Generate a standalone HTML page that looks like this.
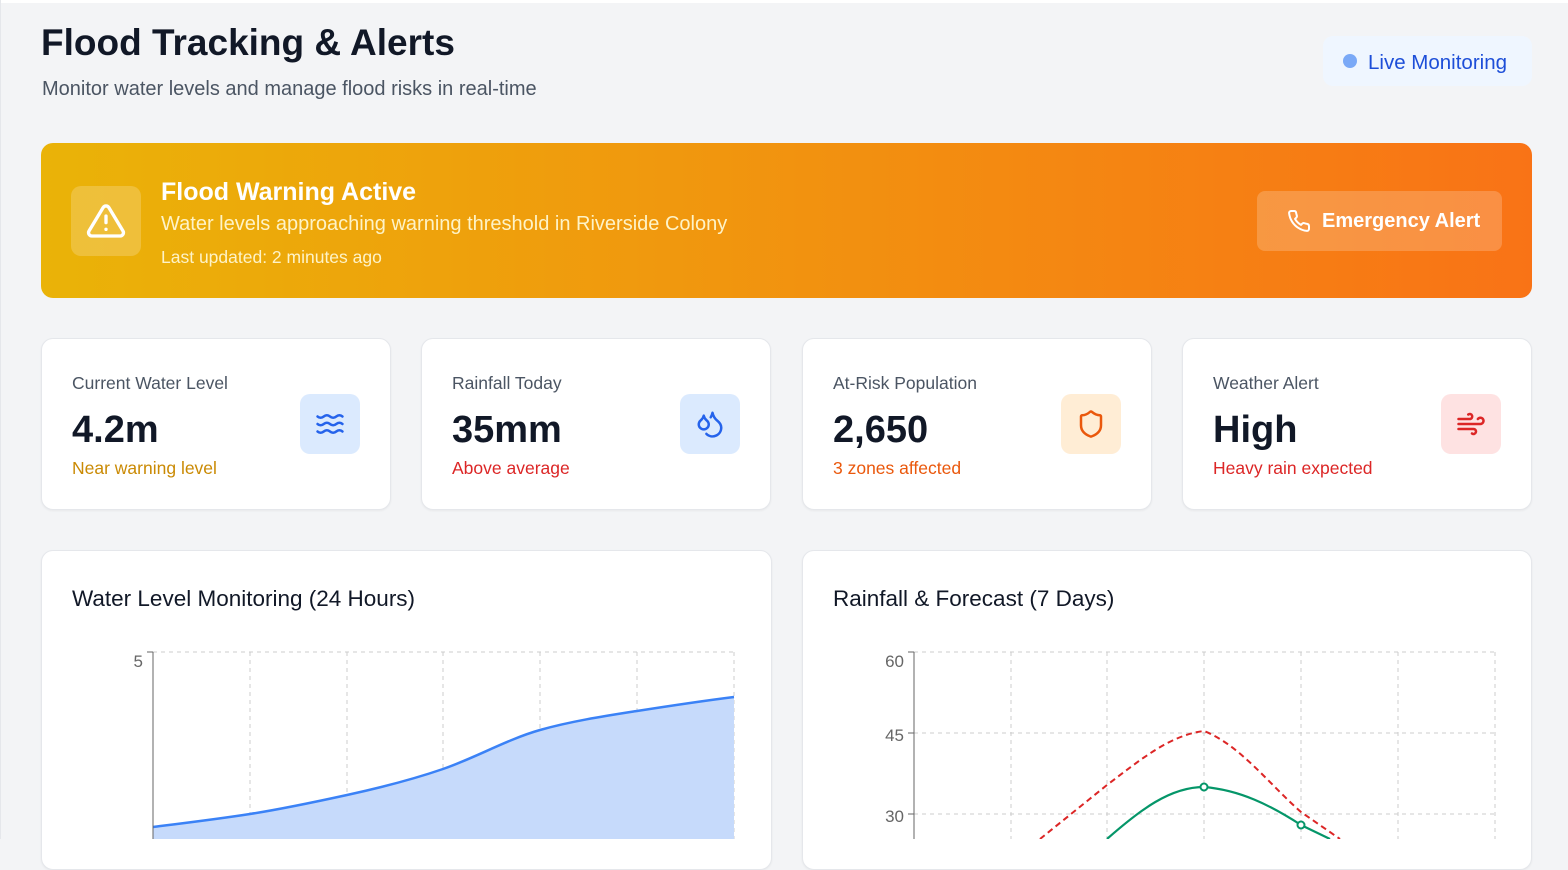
<!DOCTYPE html>
<html><head><meta charset="utf-8"><style>
*{box-sizing:border-box;margin:0;padding:0}
body{width:1568px;height:839px;overflow:hidden;background:#f3f4f6;font-family:"Liberation Sans",sans-serif;position:relative;color:#111827}
.abs{position:absolute}
.card{position:absolute;background:#fff;border:1px solid #e5e7eb;border-radius:12px;box-shadow:0 1px 2px rgba(0,0,0,.05)}
.lbl{position:absolute;left:30px;top:34px;font-size:17.5px;color:#4b5563}
.val{position:absolute;left:30px;top:70px;font-size:38px;font-weight:bold;color:#111827}
.sub{position:absolute;left:30px;top:119px;font-size:17.5px}
.ic{position:absolute;left:258px;top:55px;width:60px;height:60px;border-radius:10px;display:flex;align-items:center;justify-content:center}
</style></head><body>
<div class="abs" style="left:0;top:0;width:1568px;height:3px;background:#fff"></div>
<div class="abs" style="left:0;top:0;width:1px;height:839px;background:#e5e7eb"></div>
<div class="abs" style="left:41px;top:22px;font-size:37px;font-weight:bold;color:#111827">Flood Tracking &amp; Alerts</div>
<div class="abs" style="left:42px;top:78px;font-size:20px;color:#4b5563">Monitor water levels and manage flood risks in real-time</div>
<div class="abs" style="left:1323px;top:36px;width:209px;height:50px;background:#eff6ff;border-radius:10px"></div>
<div class="abs" style="left:1343px;top:54px;width:14px;height:14px;border-radius:50%;background:#7aa9f7"></div>
<div class="abs" style="left:1368px;top:51px;font-size:20.5px;color:#1d4ed8">Live Monitoring</div>

<div class="abs" style="left:41px;top:143px;width:1491px;height:155px;border-radius:12px;background:linear-gradient(90deg,#eab308,#f97316)"></div>
<div class="abs" style="left:71px;top:186px;width:70px;height:70px;border-radius:10px;background:rgba(255,255,255,.2);display:flex;align-items:center;justify-content:center">
<svg width="40" height="40" viewBox="0 0 24 24" fill="none" stroke="#fff" stroke-width="2" stroke-linecap="round" stroke-linejoin="round"><path d="M10.3 3.9 1.8 18a2 2 0 0 0 1.7 3h17a2 2 0 0 0 1.7-3L13.7 3.9a2 2 0 0 0-3.4 0z"/><path d="M12 9v4M12 17h.01"/></svg></div>
<div class="abs" style="left:161px;top:178px;font-size:25px;font-weight:bold;color:#fff">Flood Warning Active</div>
<div class="abs" style="left:161px;top:213px;font-size:20px;color:#fef3c7">Water levels approaching warning threshold in Riverside Colony</div>
<div class="abs" style="left:161px;top:247px;font-size:17.5px;color:#fef3c7">Last updated: 2 minutes ago</div>
<div class="abs" style="left:1257px;top:191px;width:245px;height:60px;border-radius:8px;background:rgba(255,255,255,.2)"></div>
<svg class="abs" style="left:1287px;top:209px" width="24" height="24" viewBox="0 0 24 24" fill="none" stroke="#fff" stroke-width="2" stroke-linecap="round" stroke-linejoin="round"><path d="M22 16.9v3a2 2 0 0 1-2.2 2 19.8 19.8 0 0 1-8.6-3.1 19.5 19.5 0 0 1-6-6 19.8 19.8 0 0 1-3.1-8.7A2 2 0 0 1 4.1 2h3a2 2 0 0 1 2 1.7c.1 1 .4 1.9.7 2.8a2 2 0 0 1-.5 2.1L8 9.9a16 16 0 0 0 6 6l1.3-1.3a2 2 0 0 1 2.1-.4c.9.3 1.8.6 2.8.7a2 2 0 0 1 1.7 2z"/></svg>
<div class="abs" style="left:1322px;top:210px;font-size:20px;font-weight:bold;color:#fff">Emergency Alert</div>

<div class="card" style="left:41px;top:338px;width:350px;height:172px">
<div class="lbl">Current Water Level</div><div class="val">4.2m</div><div class="sub" style="color:#ca8a04">Near warning level</div>
<div class="ic" style="background:#dbeafe"><svg width="30" height="30" viewBox="0 0 24 24" fill="none" stroke="#2563eb" stroke-width="2" stroke-linecap="round"><path d="M2 6c.6.5 1.2 1 2.5 1C7 7 7 5 9.5 5s2.5 2 5 2 2.5-2 5-2c1.3 0 1.9.5 2.5 1M2 12c.6.5 1.2 1 2.5 1 2.5 0 2.5-2 5-2s2.5 2 5 2 2.5-2 5-2c1.3 0 1.9.5 2.5 1M2 18c.6.5 1.2 1 2.5 1 2.5 0 2.5-2 5-2s2.5 2 5 2 2.5-2 5-2c1.3 0 1.9.5 2.5 1"/></svg></div></div>
<div class="card" style="left:421px;top:338px;width:350px;height:172px">
<div class="lbl">Rainfall Today</div><div class="val">35mm</div><div class="sub" style="color:#dc2626">Above average</div>
<div class="ic" style="background:#dbeafe"><svg width="30" height="30" viewBox="0 0 24 24" fill="none" stroke="#2563eb" stroke-width="2" stroke-linecap="round" stroke-linejoin="round"><path d="M7 16.3c2.2 0 4-1.8 4-4 0-1.2-.6-2.3-1.8-3.3S7.3 6.6 7 5.3c-.3 1.3-1 2.6-2.2 3.6S3 11.1 3 12.3c0 2.2 1.8 4 4 4z"/><path d="M12.6 6.6A11 11 0 0 0 14 3c.5 2.5 2 4.9 4 6.5s3 3.5 3 5.5a7 7 0 0 1-11.9 4.9"/></svg></div></div>
<div class="card" style="left:802px;top:338px;width:350px;height:172px">
<div class="lbl">At-Risk Population</div><div class="val">2,650</div><div class="sub" style="color:#ea580c">3 zones affected</div>
<div class="ic" style="background:#ffedd5"><svg width="30" height="30" viewBox="0 0 24 24" fill="none" stroke="#ea580c" stroke-width="2" stroke-linejoin="round"><path d="M20 13c0 5-3.5 7.5-7.7 9a1 1 0 0 1-.7 0C7.5 20.5 4 18 4 13V6a1 1 0 0 1 1-1c2 0 4.5-1.2 6.2-2.7a1.2 1.2 0 0 1 1.5 0C14.5 3.8 17 5 19 5a1 1 0 0 1 1 1z"/></svg></div></div>
<div class="card" style="left:1182px;top:338px;width:350px;height:172px">
<div class="lbl">Weather Alert</div><div class="val">High</div><div class="sub" style="color:#dc2626">Heavy rain expected</div>
<div class="ic" style="background:#fee2e2"><svg width="30" height="30" viewBox="0 0 24 24" fill="none" stroke="#dc2626" stroke-width="2" stroke-linecap="round"><path d="M12.8 19.6A2 2 0 1 0 14 16H2M17.5 8a2.5 2.5 0 1 1 2 4H2M9.8 4.4A2 2 0 1 1 11 8H2"/></svg></div></div>

<div class="card" style="left:41px;top:550px;width:731px;height:320px"></div>
<div class="abs" style="left:72px;top:586px;font-size:22.5px;color:#111827">Water Level Monitoring (24 Hours)</div>
<div class="card" style="left:802px;top:550px;width:730px;height:320px"></div>
<div class="abs" style="left:833px;top:586px;font-size:22.5px;color:#111827">Rainfall &amp; Forecast (7 Days)</div>

<svg class="abs" style="left:0;top:0" width="1568" height="839" font-family="Liberation Sans" font-size="17" fill="#666">
<g stroke="#ccc" stroke-dasharray="4 4" fill="none">
<path d="M153 652H734M250 652V839M347 652V839M443 652V839M540 652V839M637 652V839M734 652V839"/>
<path d="M914 652H1495M914 733H1495M914 814H1495M1011 652V839M1107 652V839M1204 652V839M1301 652V839M1398 652V839M1495 652V839"/>
</g>
<path d="M153 827C185 823 218 819 250 814S315 802 347 795 411 780 443 769 508 739 540 730 605 716 637 711 702 701 734 697V839H153Z" fill="#c6dafb"/>
<path d="M153 827C185 823 218 819 250 814S315 802 347 795 411 780 443 769 508 739 540 730 605 716 637 711 702 701 734 697" fill="none" stroke="#3b82f6" stroke-width="2.5"/>
<path d="M153 652V839M147 652H153M908 652H914M908 733H914M908 814H914M914 652V839" stroke="#666" fill="none"/>
<text x="143" y="667" text-anchor="end">5</text>
<text x="904" y="667" text-anchor="end">60</text>
<text x="904" y="741" text-anchor="end">45</text>
<text x="904" y="822" text-anchor="end">30</text>
<path d="M1040 839L1107 785C1140 760 1170 735 1204 731C1240 745 1270 785 1301 812L1340 839" fill="none" stroke="#dc2626" stroke-width="2" stroke-dasharray="6 4"/>
<path d="M1107 839C1140 810 1170 787 1204 787C1240 790 1270 805 1301 825L1330 839" fill="none" stroke="#059669" stroke-width="2.2"/>
<circle cx="1204" cy="787" r="3.5" fill="#fff" stroke="#059669" stroke-width="2"/>
<circle cx="1301" cy="825" r="3.5" fill="#fff" stroke="#059669" stroke-width="2"/>
</svg>
</body></html>
